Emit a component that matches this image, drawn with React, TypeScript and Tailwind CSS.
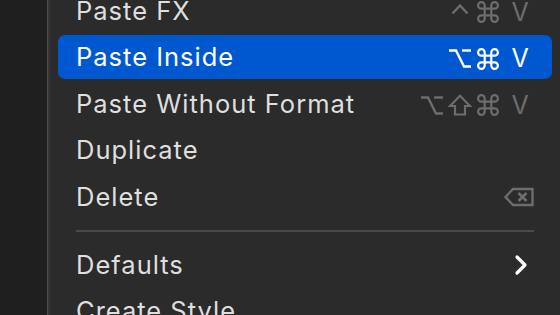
import React from "react";

const font = { fontFamily: "Inter, 'Noto Sans', sans-serif" };

function Sym({ k }: { k: string }) {
  const common = {
    fill: "none",
    stroke: "currentColor",
    strokeLinecap: "butt" as const,
    strokeLinejoin: "miter" as const,
  };
  if (k === "cmd")
    return (
      <svg width="22" height="22" viewBox="2 2 20 20" {...common} strokeWidth="2">
        <path d="M15 6v12a3 3 0 1 0 3-3H6a3 3 0 1 0 3 3V6a3 3 0 1 0-3 3h12a3 3 0 1 0-3-3" />
      </svg>
    );
  if (k === "opt")
    return (
      <svg width="24" height="21" viewBox="0 0 24 21" {...common} strokeWidth="2.4">
        <path d="M1 2.5 H8 L16 18.5 H23" />
        <path d="M14 2.5 H23" />
      </svg>
    );
  if (k === "shift")
    return (
      <svg width="24" height="22" viewBox="0 0 24 22" {...common} strokeWidth="2.2">
        <path d="M12 1.8 L22 12 H17 V20.5 H7 V12 H2 Z" />
      </svg>
    );
  return (
    <svg width="18" height="22" viewBox="0 0 18 22" {...common} strokeWidth="2.4">
      <path d="M1.5 12.5 L9 4.5 L16.5 12.5" />
    </svg>
  );
}

function Keys({ mods, active }: { mods: string[]; active?: boolean }) {
  const c = active ? "text-white" : "text-[#6d6d6d]";
  return (
    <div className={`flex items-center mt-[3px] ${c}`}>
      {mods.map((m, i) => (
        <span key={i} className="w-[28px] h-[24px] flex items-center justify-center">
          <Sym k={m} />
        </span>
      ))}
      <span
        className="w-[28px] ml-[4px] flex justify-center text-[25px] leading-none"
        style={font}
      >
        V
      </span>
    </div>
  );
}

function Row({
  label,
  active,
  right,
}: {
  label: string;
  active?: boolean;
  right?: React.ReactNode;
}) {
  return (
    <div className="h-[46.5px] flex items-center">
      <div
        className={`h-[44px] w-full rounded-[7px] px-[18px] flex items-center justify-between ${
          active ? "bg-[#0058d0] text-white" : "text-[#dfdfdf]"
        }`}
      >
        <span className="text-[25.5px] leading-none tracking-[1px]" style={font}>
          {label}
        </span>
        {right}
      </div>
    </div>
  );
}

export default function App() {
  return (
    <div className="w-[560px] h-[315px] overflow-hidden flex bg-[#2b2b2b]">
      <div className="w-[47px] shrink-0 bg-[#1f1f1f]" />
      <div className="w-[1px] shrink-0 bg-[#4c4c4c]" />
      <div className="w-[2px] shrink-0 bg-[#363636]" />
      <div className="flex-1 pl-[8px] pr-[8px]">
        <div className="mt-[-12.75px] flex flex-col">
          <Row label="Paste FX" right={<Keys mods={["ctrl", "cmd"]} />} />
          <Row label="Paste Inside" active right={<Keys mods={["opt", "cmd"]} active />} />
          <Row label="Paste Without Format" right={<Keys mods={["opt", "shift", "cmd"]} />} />
          <Row label="Duplicate" />
          <Row
            label="Delete"
            right={
              <svg width="30" height="20" viewBox="0 0 30 20" className="mt-[1px]">
                <path
                  d="M1.5 10 L9 2 H28.5 V18 H9 Z"
                  fill="none"
                  stroke="#6d6d6d"
                  strokeWidth="2.4"
                  strokeLinejoin="miter"
                />
                <path
                  d="M14.5 6 L22.5 14 M22.5 6 L14.5 14"
                  stroke="#6d6d6d"
                  strokeWidth="2.8"
                  strokeLinecap="butt"
                />
              </svg>
            }
          />
          <div className="h-[21.5px] flex items-center px-[18px]">
            <div className="h-[2px] w-full bg-[#4a4a4a]" />
          </div>
          <Row
            label="Defaults"
            right={
              <svg width="14" height="22" viewBox="0 0 14 22" className="mr-[6px]">
                <path
                  d="M3 3 L11 11 L3 19"
                  fill="none"
                  stroke="#ffffff"
                  strokeWidth="3.2"
                  strokeLinecap="round"
                  strokeLinejoin="round"
                />
              </svg>
            }
          />
          <Row label="Create Style" />
        </div>
      </div>
    </div>
  );
}
